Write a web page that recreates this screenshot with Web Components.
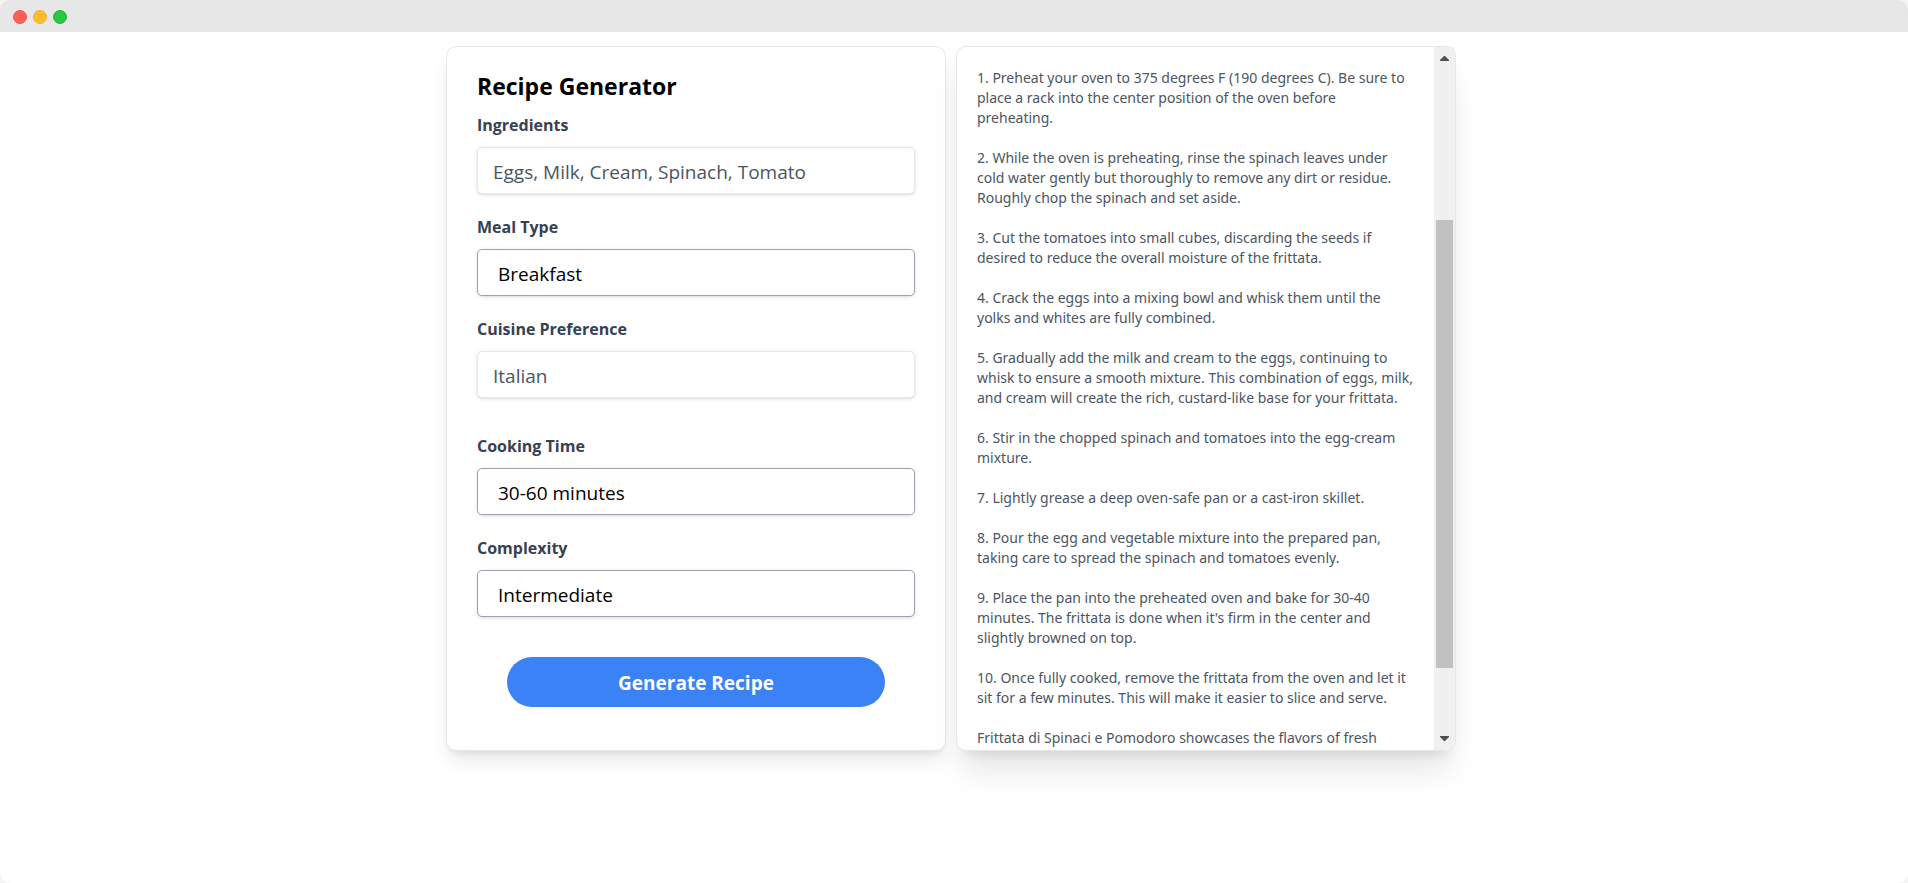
<!DOCTYPE html>
<html lang="en">
<head>
<meta charset="utf-8">
<title>Recipe Generator</title>
<style>
  html { background: #f3f3f3; }
  body { margin: 0; font-family: "Open Sans", "Noto Sans", sans-serif; }
</style>
</head>
<body>
<app-window>
  <recipe-form>
    <recipe-field label="Ingredients" value="Eggs, Milk, Cream, Spinach, Tomato"></recipe-field>
    <recipe-select label="Meal Type" options="Breakfast"></recipe-select>
    <recipe-field class="spaced" label="Cuisine Preference" value="Italian"></recipe-field>
    <recipe-select label="Cooking Time" options="30-60 minutes"></recipe-select>
    <recipe-select label="Complexity" options="Intermediate"></recipe-select>
  </recipe-form>
  <recipe-result>
    <p>1. Preheat your oven to 375 degrees F (190 degrees C). Be sure to place a rack into the center position of the oven before preheating.</p>
    <p>2. While the oven is preheating, rinse the spinach leaves under cold water gently but thoroughly to remove any dirt or residue. Roughly chop the spinach and set aside.</p>
    <p>3. Cut the tomatoes into small cubes, discarding the seeds if desired to reduce the overall moisture of the frittata.</p>
    <p>4. Crack the eggs into a mixing bowl and whisk them until the yolks and whites are fully combined.</p>
    <p>5. Gradually add the milk and cream to the eggs, continuing to whisk to ensure a smooth mixture. This combination of eggs, milk, and cream will create the rich, custard-like base for your frittata.</p>
    <p>6. Stir in the chopped spinach and tomatoes into the egg-cream mixture.</p>
    <p>7. Lightly grease a deep oven-safe pan or a cast-iron skillet.</p>
    <p>8. Pour the egg and vegetable mixture into the prepared pan, taking care to spread the spinach and tomatoes evenly.</p>
    <p>9. Place the pan into the preheated oven and bake for 30-40 minutes. The frittata is done when it's firm in the center and slightly browned on top.</p>
    <p>10. Once fully cooked, remove the frittata from the oven and let it sit for a few minutes. This will make it easier to slice and serve.</p>
    <p>Frittata di Spinaci e Pomodoro showcases the flavors of fresh</p>
  </recipe-result>
</app-window>

<template id="window-tpl">
  <style>
    :host { display: flex; flex-direction: column; min-height: 100vh; background: #fff; border-radius: 10px; overflow: hidden; }
    header { display: flex; align-items: center; gap: 6px; height: 32px; padding: 2px 13px 0; box-sizing: border-box; background: #e7e7e7; }
    i { width: 14px; height: 14px; box-sizing: border-box; border-radius: 50%; border: 1px solid; }
    .close { background: #ff5f57; border-color: #f2564f; }
    .min { background: #febc2e; border-color: #eeae2c; }
    .max { background: #28c840; border-color: #22b83a; }
    main { display: grid; grid-template-columns: minmax(0, 500px) minmax(0, 500px); gap: 10px; justify-content: center; padding: 14px 6px 40px 0; }
  </style>
  <header><i class="close"></i><i class="min"></i><i class="max"></i></header>
  <main><slot></slot></main>
</template>

<template id="form-tpl">
  <style>
    :host { display: block; box-sizing: border-box; padding: 23px 30px 43px; background: #fff; border: 1px solid #e5e7eb; border-radius: 10px;
      box-shadow: 0 12px 19px -4px rgba(0,0,0,.1), 0 5px 8px -5px rgba(0,0,0,.1); }
    h1 { margin: 0 0 11px; font-size: 23px; line-height: 32px; font-weight: 700; color: #000; }
    .fields { display: flex; flex-direction: column; gap: 21px; }
    ::slotted(.spaced) { margin-bottom: 15px; }
    .actions { display: flex; padding: 40px 30px 0; }
    button { flex: 1; height: 50px; padding: 2px 0 0; border: 0; border-radius: 25px; background: #3b82f6; color: #fff; font: 700 19px/24px "Open Sans", "Noto Sans", sans-serif; cursor: pointer; }
  </style>
  <form>
    <h1>Recipe Generator</h1>
    <div class="fields"><slot></slot></div>
    <div class="actions"><button type="button">Generate Recipe</button></div>
  </form>
</template>

<template id="field-tpl">
  <style>
    :host { display: block; }
    label { display: block; margin-bottom: 9px; font-size: 16px; line-height: 25px; font-weight: 700; color: #374151; }
    input, select { display: block; width: 100%; height: 47px; box-sizing: border-box; margin: 0; appearance: none; outline: 0; background: #fff;
      border-radius: 5px; font: 400 19px/26px "Open Sans", "Noto Sans", sans-serif; box-shadow: 0 1px 4px rgba(0,0,0,.1), 0 1px 3px -1px rgba(0,0,0,.1); }
    input { padding: 2px 15px 0; border: 1px solid #e5e7eb; color: #4b5563; }
    select { padding: 2px 20px 0; border: 1px solid #9ca3af; color: #000; }
  </style>
  <label for="control"></label>
</template>

<template id="result-tpl">
  <style>
    :host { display: flex; box-sizing: border-box; background: #fff; border: 1px solid #e5e7eb; border-radius: 10px;
      box-shadow: 0 25px 31px -6px rgba(0,0,0,.1), 0 10px 13px -8px rgba(0,0,0,.1); }
    .text { flex: 1; min-width: 0; contain: size; overflow: hidden; box-sizing: border-box; padding: 21px 20px 0; color: #4b5563; font-family: "Noto Sans", "Open Sans", sans-serif; font-size: 14px; line-height: 20px; }
    ::slotted(p) { margin: 0 0 20px; }
    .rail { display: flex; flex-direction: column; width: 21px; background: #f0f0f0; border-bottom-right-radius: 9px; }
    svg { display: block; width: 21px; height: 21px; fill: #505050; }
    .track { flex: 1; display: grid; grid-template-rows: 152fr 448fr 61fr; padding: 0 2px; }
    .thumb { grid-row: 2; background: #c1c1c1; }
  </style>
  <div class="text"><slot></slot></div>
  <div class="rail">
    <svg viewBox="0 0 21 21"><path d="M6 14v-1l4-4h1l4 4v1z"/></svg>
    <div class="track"><div class="thumb"></div></div>
    <svg viewBox="0 0 21 21"><path d="M6 7v1l4 4h1l4-4V7z"/></svg>
  </div>
</template>

<script>
  class TemplateElement extends HTMLElement {
    constructor() {
      super();
      this.attachShadow({ mode: "open" })
        .append(document.getElementById(this.constructor.template).content.cloneNode(true));
    }
  }
  class AppWindow extends TemplateElement { static template = "window-tpl"; }
  class RecipeForm extends TemplateElement { static template = "form-tpl"; }
  class RecipeResult extends TemplateElement { static template = "result-tpl"; }

  class RecipeField extends TemplateElement {
    static template = "field-tpl";
    connectedCallback() {
      this.shadowRoot.querySelector("label").textContent = this.getAttribute("label");
      const control = this.createControl();
      control.id = "control";
      this.shadowRoot.append(control);
    }
    createControl() {
      const input = document.createElement("input");
      input.type = "text";
      input.value = this.getAttribute("value");
      return input;
    }
  }
  class RecipeSelect extends RecipeField {
    createControl() {
      const select = document.createElement("select");
      for (const name of this.getAttribute("options").split("|")) select.add(new Option(name));
      return select;
    }
  }
  customElements.define("app-window", AppWindow);
  customElements.define("recipe-form", RecipeForm);
  customElements.define("recipe-field", RecipeField);
  customElements.define("recipe-select", RecipeSelect);
  customElements.define("recipe-result", RecipeResult);
</script>
</body>
</html>
